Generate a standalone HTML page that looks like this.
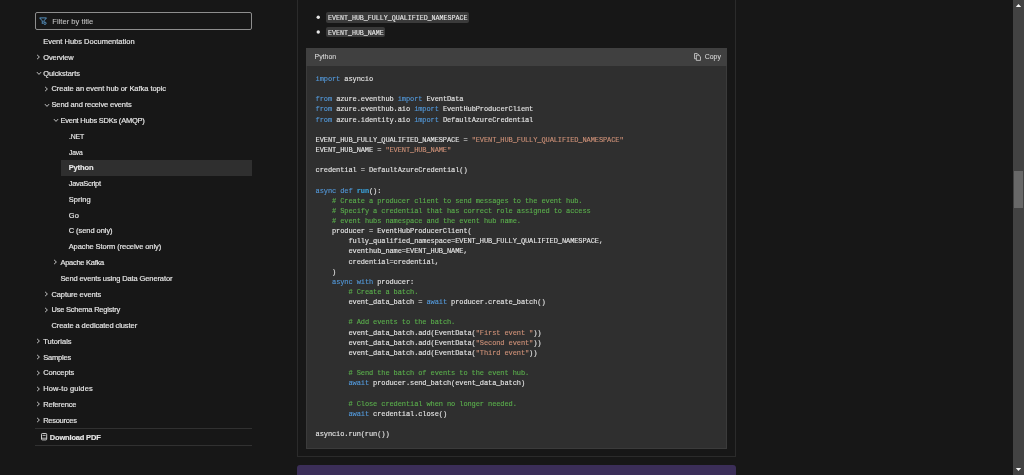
<!DOCTYPE html>
<html lang="en"><head><meta charset="utf-8"><title>Quickstart: Send or receive events using Python - Azure Event Hubs</title>
<style>
*{box-sizing:border-box;margin:0;padding:0}
html,body{width:1024px;height:475px;overflow:hidden;background:#171717;color:#e6e6e6;font-family:"Liberation Sans",sans-serif}
body{position:relative}
#root{position:absolute;left:0;top:0;width:1024px;height:475px;will-change:transform}
.abs{position:absolute}
.sb{position:absolute;white-space:nowrap;font-size:7.47px;line-height:12px;height:12px;color:#e6e6e6;-webkit-text-stroke:0.18px #e6e6e6}
.sb.b{font-weight:700}
.ch{position:absolute;overflow:visible}
#filter{position:absolute;left:35px;top:12px;width:217px;height:17.5px;border:1px solid #8e8e8e;border-radius:2px;background:#171717}
#filter span{position:absolute;left:16.3px;top:2.8px;font-size:7.6px;line-height:12px;color:#c6c6c6;white-space:nowrap;-webkit-text-stroke-width:0.05px}
#sel{position:absolute;left:60.75px;top:159.5px;width:191.5px;height:16px;background:#2f2f2f}
.hr{position:absolute;left:35px;width:217px;height:1px;background:#313131}
#panel{position:absolute;left:297.3px;top:-10px;width:438.7px;height:467px;border:1px solid #2b2b2b;background:#171717}
.ic{position:absolute;font-family:"Liberation Mono",monospace;font-size:6.65px;line-height:12px;height:10.5px;-webkit-text-stroke-width:0.12px;background:#3a3a3a;border-radius:2px;color:#e6e6e6;white-space:pre;padding:0 1.5px 0 1.8px}
.dot{position:absolute;width:3.4px;height:3.4px;border-radius:50%;background:#e6e6e6}
#cb{position:absolute;left:306px;top:48px;width:421.3px;height:400.5px;background:#2f2f2f;border:1px solid #3b3b3b}
#cbh{position:absolute;left:306px;top:48px;width:421.3px;height:18px;background:#404040}
#cbh .lang{position:absolute;left:8.5px;top:3px;font-size:6.95px;line-height:12px;color:#dcdcdc;-webkit-text-stroke-width:0.06px}
#cbh .copy{position:absolute;left:398.7px;top:3px;font-size:6.95px;line-height:12px;color:#dcdcdc;-webkit-text-stroke-width:0.06px}
pre{position:absolute;left:315.6px;top:74.07px;font-family:"Liberation Mono",monospace;font-size:7px;line-height:10.133px;color:#e6e6e6;white-space:pre;letter-spacing:-0.095px;-webkit-text-stroke-width:0.12px}
.k{color:#5398d9}.s{color:#ce9178}.c{color:#5aae4c}.t{color:#3aa0d8;font-weight:700}
#alert{position:absolute;left:297.2px;top:465px;width:438.8px;height:30px;border-radius:3px;background:#3b2e58}
#sbt{position:absolute;left:1013px;top:0;width:11px;height:475px;background:#424242}
#sbth{position:absolute;left:1014px;top:171px;width:9px;height:37px;background:#686868}
</style></head><body><div id="root">

<div id="filter"><svg class="ch" style="left:3.1px;top:3.7px" width="8.2" height="8.2" viewBox="0 0 16 16"><path d="M1.2 1.8 H14.6 L9.6 7.6 V10.2 M6.4 13.6 V7.6 L1.2 1.8" fill="none" stroke="#5fa3d8" stroke-width="1.7"/><circle cx="11.6" cy="12.2" r="2.3" fill="none" stroke="#5fa3d8" stroke-width="1.6"/></svg><span>Filter by title</span></div>
<div id="sel"></div>
<div class="sb" id="i0" style="left:43.20px;top:35.50px;letter-spacing:0.022px">Event Hubs Documentation</div>
<div class="sb" id="i1" style="left:43.20px;top:51.50px;letter-spacing:-0.086px">Overview</div>
<svg class="ch" style="left:36.20px;top:54.28px" width="5" height="6" viewBox="0 0 5 6"><path d="M1.1 0.9 L3.4 3 L1.1 5.1" fill="none" stroke="#cfcfcf" stroke-width="0.95"/></svg>
<div class="sb" id="i2" style="left:43.20px;top:67.50px;letter-spacing:-0.050px">Quickstarts</div>
<svg class="ch" style="left:36.00px;top:71.06px" width="6" height="5" viewBox="0 0 6 5"><path d="M0.9 1.1 L3 3.4 L5.1 1.1" fill="none" stroke="#cfcfcf" stroke-width="0.95"/></svg>
<div class="sb" id="i3" style="left:51.45px;top:82.50px;letter-spacing:-0.023px">Create an event hub or Kafka topic</div>
<svg class="ch" style="left:44.45px;top:85.84px" width="5" height="6" viewBox="0 0 5 6"><path d="M1.1 0.9 L3.4 3 L1.1 5.1" fill="none" stroke="#cfcfcf" stroke-width="0.95"/></svg>
<div class="sb" id="i4" style="left:51.45px;top:98.50px;letter-spacing:-0.091px">Send and receive events</div>
<svg class="ch" style="left:44.25px;top:102.62px" width="6" height="5" viewBox="0 0 6 5"><path d="M0.9 1.1 L3 3.4 L5.1 1.1" fill="none" stroke="#cfcfcf" stroke-width="0.95"/></svg>
<div class="sb" id="i5" style="left:60.45px;top:114.50px;letter-spacing:-0.214px">Event Hubs SDKs (AMQP)</div>
<svg class="ch" style="left:53.25px;top:118.40px" width="6" height="5" viewBox="0 0 6 5"><path d="M0.9 1.1 L3 3.4 L5.1 1.1" fill="none" stroke="#cfcfcf" stroke-width="0.95"/></svg>
<div class="sb" id="i6" style="left:68.70px;top:130.50px;letter-spacing:-0.150px;transform-origin:0 50%;transform:scaleX(0.9190)">.NET</div>
<div class="sb" id="i7" style="left:68.70px;top:146.50px;letter-spacing:-0.150px;transform-origin:0 50%;transform:scaleX(0.9003)">Java</div>
<div class="sb b" id="i8" style="left:68.70px;top:161.50px;letter-spacing:-0.100px">Python</div>
<div class="sb" id="i9" style="left:68.70px;top:177.50px;letter-spacing:-0.278px">JavaScript</div>
<div class="sb" id="i10" style="left:68.70px;top:193.50px;letter-spacing:0.100px">Spring</div>
<div class="sb" id="i11" style="left:68.70px;top:209.50px;letter-spacing:0.250px">Go</div>
<div class="sb" id="i12" style="left:68.70px;top:224.50px;letter-spacing:-0.042px">C (send only)</div>
<div class="sb" id="i13" style="left:68.70px;top:240.50px;letter-spacing:-0.067px">Apache Storm (receive only)</div>
<div class="sb" id="i14" style="left:60.45px;top:256.50px;letter-spacing:-0.250px">Apache Kafka</div>
<svg class="ch" style="left:53.45px;top:259.42px" width="5" height="6" viewBox="0 0 5 6"><path d="M1.1 0.9 L3.4 3 L1.1 5.1" fill="none" stroke="#cfcfcf" stroke-width="0.95"/></svg>
<div class="sb" id="i15" style="left:60.45px;top:272.50px;letter-spacing:-0.097px">Send events using Data Generator</div>
<div class="sb" id="i16" style="left:51.45px;top:288.50px;letter-spacing:-0.058px">Capture events</div>
<svg class="ch" style="left:44.45px;top:290.98px" width="5" height="6" viewBox="0 0 5 6"><path d="M1.1 0.9 L3.4 3 L1.1 5.1" fill="none" stroke="#cfcfcf" stroke-width="0.95"/></svg>
<div class="sb" id="i17" style="left:51.45px;top:303.50px;letter-spacing:-0.194px">Use Schema Registry</div>
<svg class="ch" style="left:44.45px;top:306.76px" width="5" height="6" viewBox="0 0 5 6"><path d="M1.1 0.9 L3.4 3 L1.1 5.1" fill="none" stroke="#cfcfcf" stroke-width="0.95"/></svg>
<div class="sb" id="i18" style="left:51.45px;top:319.50px;letter-spacing:-0.060px">Create a dedicated cluster</div>
<div class="sb" id="i19" style="left:43.20px;top:335.50px;letter-spacing:0.000px">Tutorials</div>
<svg class="ch" style="left:36.20px;top:338.32px" width="5" height="6" viewBox="0 0 5 6"><path d="M1.1 0.9 L3.4 3 L1.1 5.1" fill="none" stroke="#cfcfcf" stroke-width="0.95"/></svg>
<div class="sb" id="i20" style="left:43.20px;top:351.50px;letter-spacing:-0.167px">Samples</div>
<svg class="ch" style="left:36.20px;top:354.10px" width="5" height="6" viewBox="0 0 5 6"><path d="M1.1 0.9 L3.4 3 L1.1 5.1" fill="none" stroke="#cfcfcf" stroke-width="0.95"/></svg>
<div class="sb" id="i21" style="left:43.20px;top:366.50px;letter-spacing:-0.071px">Concepts</div>
<svg class="ch" style="left:36.20px;top:369.88px" width="5" height="6" viewBox="0 0 5 6"><path d="M1.1 0.9 L3.4 3 L1.1 5.1" fill="none" stroke="#cfcfcf" stroke-width="0.95"/></svg>
<div class="sb" id="i22" style="left:43.20px;top:382.50px;letter-spacing:0.146px">How-to guides</div>
<svg class="ch" style="left:36.20px;top:385.66px" width="5" height="6" viewBox="0 0 5 6"><path d="M1.1 0.9 L3.4 3 L1.1 5.1" fill="none" stroke="#cfcfcf" stroke-width="0.95"/></svg>
<div class="sb" id="i23" style="left:43.20px;top:398.50px;letter-spacing:-0.156px">Reference</div>
<svg class="ch" style="left:36.20px;top:401.44px" width="5" height="6" viewBox="0 0 5 6"><path d="M1.1 0.9 L3.4 3 L1.1 5.1" fill="none" stroke="#cfcfcf" stroke-width="0.95"/></svg>
<div class="sb" id="i24" style="left:43.20px;top:414.50px;letter-spacing:-0.250px">Resources</div>
<svg class="ch" style="left:36.20px;top:417.22px" width="5" height="6" viewBox="0 0 5 6"><path d="M1.1 0.9 L3.4 3 L1.1 5.1" fill="none" stroke="#cfcfcf" stroke-width="0.95"/></svg>
<div class="hr" style="top:428px"></div><div class="hr" style="top:445px"></div>
<svg class="ch" style="left:41px;top:432.9px" width="7" height="8" viewBox="0 0 7 8"><rect x="0.5" y="0.5" width="5.2" height="6.4" rx="0.8" fill="none" stroke="#e0e0e0" stroke-width="0.9"/><path d="M1.6 2.4 H4.6 M0.5 5.2 H5.7" stroke="#e0e0e0" stroke-width="0.8"/></svg>
<div class="sb b" id="dl" style="left:49.8px;top:432.10px;letter-spacing:-0.159px">Download PDF</div>
<div id="panel"></div>
<svg class="ch" style="left:315px;top:10px" width="8" height="30" viewBox="0 0 8 30"><circle cx="3.25" cy="7.25" r="1.7" fill="#e6e6e6"/><circle cx="3.25" cy="22" r="1.7" fill="#e6e6e6"/></svg>
<div class="ic" id="ic1" style="left:326.2px;top:12px">EVENT_HUB_FULLY_QUALIFIED_NAMESPACE</div>
<div class="ic" id="ic2" style="left:326.2px;top:26.8px">EVENT_HUB_NAME</div>
<div id="cb"></div><div id="cbh"><span class="lang">Python</span><svg class="ch" style="left:387.6px;top:4.7px" width="7.2" height="8.1" viewBox="0 0 8 9"><path d="M0.6 0.6 H3.6 L5.2 2.2 V6.4 H0.6 Z" fill="none" stroke="#e6e6e6" stroke-width="0.8"/><path d="M2.6 2.4 H5.4 L7.2 4.2 V8.2 H2.6 Z" fill="#404040" stroke="#e6e6e6" stroke-width="0.8"/></svg><span class="copy">Copy</span></div>
<pre id="code"><span class="k">import</span> asyncio

<span class="k">from</span> azure.eventhub <span class="k">import</span> EventData
<span class="k">from</span> azure.eventhub.aio <span class="k">import</span> EventHubProducerClient
<span class="k">from</span> azure.identity.aio <span class="k">import</span> DefaultAzureCredential

EVENT_HUB_FULLY_QUALIFIED_NAMESPACE = <span class="s">"EVENT_HUB_FULLY_QUALIFIED_NAMESPACE"</span>
EVENT_HUB_NAME = <span class="s">"EVENT_HUB_NAME"</span>

credential = DefaultAzureCredential()

<span class="k">async</span> <span class="k">def</span> <span class="t">run</span>():
    <span class="c"># Create a producer client to send messages to the event hub.</span>
    <span class="c"># Specify a credential that has correct role assigned to access</span>
    <span class="c"># event hubs namespace and the event hub name.</span>
    producer = EventHubProducerClient(
        fully_qualified_namespace=EVENT_HUB_FULLY_QUALIFIED_NAMESPACE,
        eventhub_name=EVENT_HUB_NAME,
        credential=credential,
    )
    <span class="k">async</span> <span class="k">with</span> producer:
        <span class="c"># Create a batch.</span>
        event_data_batch = <span class="k">await</span> producer.create_batch()

        <span class="c"># Add events to the batch.</span>
        event_data_batch.add(EventData(<span class="s">"First event "</span>))
        event_data_batch.add(EventData(<span class="s">"Second event"</span>))
        event_data_batch.add(EventData(<span class="s">"Third event"</span>))

        <span class="c"># Send the batch of events to the event hub.</span>
        <span class="k">await</span> producer.send_batch(event_data_batch)

        <span class="c"># Close credential when no longer needed.</span>
        <span class="k">await</span> credential.close()

asyncio.run(run())</pre>
<div id="alert"></div>
<div id="sbt"></div><div id="sbth"></div>
<svg class="ch" style="left:1015px;top:3px" width="7" height="5" viewBox="0 0 7 5"><path d="M0.8 4.0 L3.5 0.9 L6.2 4.0 Z" fill="#f4f4f4"/></svg>
<svg class="ch" style="left:1015px;top:467px" width="7" height="5" viewBox="0 0 7 5"><path d="M0.8 1.0 L3.5 4.1 L6.2 1.0 Z" fill="#f4f4f4"/></svg>
</div></body></html>
